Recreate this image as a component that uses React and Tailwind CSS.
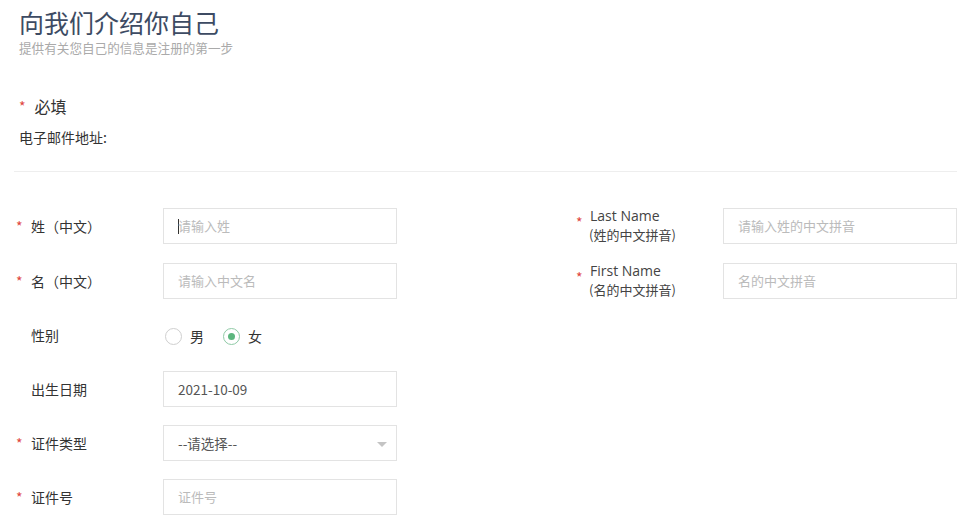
const font = { fontFamily: '"Noto Sans CJK SC", "Noto Sans", sans-serif' };

function Star() {
  return <span className="text-[#e0463e] text-[14px] leading-none">*</span>;
}

function Field({ placeholder, value, caret, select }) {
  return (
    <div className="relative flex items-center w-[234px] h-[36px] border border-[#e3e3e3] bg-white px-[14px] text-[13px]">
      {caret && <span className="w-px h-[15px] bg-[#333] mr-[-1px]"></span>}
      {value ? (
        <span className="text-[#555] text-[13.5px]">{value}</span>
      ) : (
        <span className="text-[#bbb]">{placeholder}</span>
      )}
      {select && (
        <span className="absolute right-[9px] top-[16px] w-0 h-0 border-l-[5px] border-r-[5px] border-t-[5px] border-l-transparent border-r-transparent border-t-[#c4c4c4]"></span>
      )}
    </div>
  );
}

function LeftLabel({ required, children }) {
  return (
    <div className="w-[149px] flex items-center text-[14px] text-[#333]">
      <span className="w-[17px] pl-[2px]">{required && <Star />}</span>
      <span>{children}</span>
    </div>
  );
}

function RightLabel({ title, sub }) {
  return (
    <div className="w-[149px] flex items-start -mt-[2px]">
      <span className="w-[16px] pl-[2px] pt-[3px]"><Star /></span>
      <div className="flex flex-col">
        <span className="text-[14px] text-[#444] leading-[19px]" style={{ fontFamily: '"Open Sans", "Noto Sans", sans-serif' }}>{title}</span>
        <span className="text-[13px] text-[#444] leading-[19px] -ml-[1px]">{sub}</span>
      </div>
    </div>
  );
}

function Radio({ checked, label }) {
  return (
    <label className="flex items-center gap-[8px] mr-[19px]">
      <span
        className={
          checked
            ? "w-[17px] h-[17px] rounded-full border border-[#8fcaa6] flex items-center justify-center"
            : "w-[17px] h-[17px] rounded-full border border-[#cfcfcf]"
        }
      >
        {checked && <span className="w-[7px] h-[7px] rounded-full bg-[#5cb67e]"></span>}
      </span>
      <span className="text-[14px] text-[#333]">{label}</span>
    </label>
  );
}

export default function App() {
  return (
    <div className="bg-white w-[963px] h-[516px] overflow-hidden pl-[14px] pr-[6px]" style={font}>
      <div className="pl-[5px] pt-[7px]">
        <h1 className="text-[25px] leading-[30px] text-[#3d4b63]">向我们介绍你自己</h1>
        <p className="text-[12.6px] leading-[16px] text-[#aaa] mt-[3px]">提供有关您自己的信息是注册的第一步</p>
      </div>

      <div className="pl-[5px] mt-[40px] flex items-center h-[20px]">
        <Star />
        <span className="ml-[9px] text-[16px] text-[#333]">必填</span>
      </div>
      <div className="pl-[5px] mt-[11px] text-[14px] text-[#333] leading-[20px]">电子邮件地址:</div>

      <div className="mt-[24px] border-t border-[#eeeeee]"></div>

      <div className="mt-[36px] flex flex-col gap-[18px]">
        <div className="flex justify-between">
          <div className="flex items-center">
            <LeftLabel required>姓（中文）</LeftLabel>
            <Field placeholder="请输入姓" caret />
          </div>
          <div className="flex items-center">
            <RightLabel title="Last Name" sub="(姓的中文拼音)" />
            <Field placeholder="请输入姓的中文拼音" />
          </div>
        </div>

        <div className="flex justify-between mt-[1px]">
          <div className="flex items-center">
            <LeftLabel required>名（中文）</LeftLabel>
            <Field placeholder="请输入中文名" />
          </div>
          <div className="flex items-center">
            <RightLabel title="First Name" sub="(名的中文拼音)" />
            <Field placeholder="名的中文拼音" />
          </div>
        </div>

        <div className="flex items-center h-[36px]">
          <LeftLabel>性别</LeftLabel>
          <div className="flex items-center pl-[2px] pt-[3px]">
            <Radio label="男" />
            <Radio checked label="女" />
          </div>
        </div>

        <div className="flex items-center">
          <LeftLabel>出生日期</LeftLabel>
          <Field value="2021-10-09" />
        </div>

        <div className="flex items-center">
          <LeftLabel required>证件类型</LeftLabel>
          <Field value="--请选择--" select />
        </div>

        <div className="flex items-center">
          <LeftLabel required>证件号</LeftLabel>
          <Field placeholder="证件号" />
        </div>
      </div>
    </div>
  );
}
